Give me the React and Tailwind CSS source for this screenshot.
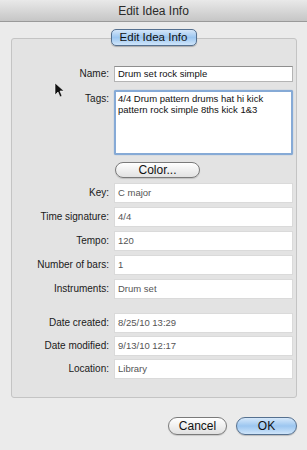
export default function App() {
  const font = { fontFamily: '"Liberation Sans", Arial, sans-serif' };

  const infoRows = [
    { label: "Key:", value: "C major" },
    { label: "Time signature:", value: "4/4" },
    { label: "Tempo:", value: "120" },
    { label: "Number of bars:", value: "1" },
    { label: "Instruments:", value: "Drum set" },
  ];
  const dateRows = [
    { label: "Date created:", value: "8/25/10 13:29" },
    { label: "Date modified:", value: "9/13/10 12:17" },
    { label: "Location:", value: "Library" },
  ];

  return (
    <div
      className="relative w-[307px] h-[450px] bg-[#ebebeb] flex flex-col overflow-hidden"
      style={font}
    >
      {/* Title bar */}
      <div className="h-[22px] shrink-0 flex items-center justify-center bg-gradient-to-b from-[#e9e9e9] to-[#c6c6c6] border-b border-[#9a9a9a] text-[12px] text-[#2a2a2a]">
        Edit Idea Info
      </div>

      {/* Tab */}
      <div className="flex justify-center pt-[7px] relative z-10">
        <div className="w-[86px] h-[17px] rounded-[5px] border border-[#55708f] bg-gradient-to-b from-[#d4e6f9] via-[#9cc6f0] to-[#cfe5fa] flex items-center justify-center text-[11.5px] text-[#111] shadow-[0_1px_1px_rgba(0,0,0,0.25)]">
          Edit Idea Info
        </div>
      </div>

      {/* Group box */}
      <div className="mx-[11px] -mt-[8px] h-[360px] w-[286px] rounded-[3px] border border-[#c4c4c4] bg-[#e3e3e3] pr-[3px] pt-[27px]">
        <div className="grid grid-cols-[97px_1fr] gap-x-[5px] items-start">
          <div className="text-right text-[10px] text-[#1a1a1a] leading-[16px]">Name:</div>
          <div className="h-[16px] bg-white border border-[#b4b4b4] border-t-[#8e8e8e] px-[3px] text-[9.5px] leading-[14px] text-[#111]">
            Drum set rock simple
          </div>

          <div className="mt-[8px] pt-[3px] text-right text-[10px] text-[#1a1a1a] leading-[12px]">Tags:</div>
          <div className="mt-[8px] h-[65px] bg-white border-[2px] border-[#86aad6] rounded-[2px] px-[2px] pt-[1px] text-[9.5px] leading-[11px] text-[#111] shadow-[0_0_1px_#6b94c7]">
            4/4 Drum pattern drums hat hi kick pattern rock simple 8ths kick 1&amp;3
          </div>

          <div className="mt-[7px]" />
          <div className="mt-[7px] pl-[1px]">
            <div className="w-[85px] h-[16px] rounded-full border border-[#7a7a7a] bg-gradient-to-b from-white via-[#f0f0f0] to-[#e2e2e2] flex items-center justify-center text-[12px] text-[#111] shadow-[0_1px_1px_rgba(0,0,0,0.15)]">
              Color...
            </div>
          </div>
        </div>

        <div className="grid grid-cols-[97px_1fr] gap-x-[5px] gap-y-[4px] mt-[5px]">
          {infoRows.map((r) => (
            <Row key={r.label} label={r.label} value={r.value} />
          ))}
        </div>

        <div className="grid grid-cols-[97px_1fr] gap-x-[5px] gap-y-[3px] mt-[14px]">
          {dateRows.map((r) => (
            <Row key={r.label} label={r.label} value={r.value} />
          ))}
        </div>
      </div>

      {/* Buttons */}
      <div className="flex justify-end gap-[9px] pr-[10px] mt-[19px]">
        <div className="w-[59px] h-[18px] rounded-full border border-[#7a7a7a] bg-gradient-to-b from-white via-[#f0f0f0] to-[#e0e0e0] flex items-center justify-center text-[12px] text-[#111] shadow-[0_1px_1px_rgba(0,0,0,0.15)]">
          Cancel
        </div>
        <div className="w-[61px] h-[18px] rounded-full border border-[#55708f] bg-gradient-to-b from-[#d6e8fa] via-[#9cc6f0] to-[#cfe5fa] flex items-center justify-center text-[12px] text-[#111] shadow-[0_1px_1px_rgba(0,0,0,0.2)]">
          OK
        </div>
      </div>

      {/* Mouse pointer */}
      <svg
        className="absolute left-[54px] top-[82px]"
        width="10"
        height="16"
        viewBox="0 0 10 16"
      >
        <path d="M1 1 L1 13 L4 10 L6 15 L8 14 L6 9 L10 9 Z" fill="#111" stroke="#fff" strokeWidth="0.6" />
      </svg>
    </div>
  );
}

function Row({ label, value }) {
  return (
    <>
      <div className="text-right text-[10px] text-[#1a1a1a] leading-[12px] pt-[4px]">{label}</div>
      <div className="h-[20px] bg-white border border-[#dadada] px-[3px] pt-[3px] text-[9.5px] leading-[11px] text-[#555]">
        {value}
      </div>
    </>
  );
}
